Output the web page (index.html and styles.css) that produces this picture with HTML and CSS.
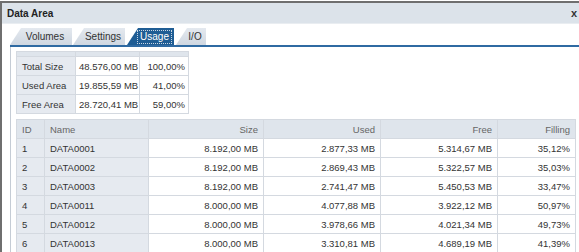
FILE: index.html
```html
<!DOCTYPE html>
<html>

<head>
    <meta charset="UTF-8">
    <title>Data Area</title>
    <link rel="stylesheet" href="styles.css">
</head>

<body>
    <div class="window">
        <div class="titlebar">
            <span class="title">Data Area</span>
            <span class="close">x</span>
        </div>

        <div class="content">
            <div class="tabs">
                <div class="tab tab-volumes">Volumes</div>
                <div class="tab tab-settings">Settings</div>
                <div class="tab tab-usage active"><span>Usage</span></div>
                <div class="tab tab-io">I/O</div>
            </div>

            <div class="panel">
                <table class="summary">
                    <colgroup>
                        <col class="sum-label">
                        <col class="sum-value">
                        <col class="sum-pct">
                    </colgroup>
                    <tr class="band">
                        <td></td>
                        <td></td>
                        <td></td>
                    </tr>
                    <tr>
                        <th>Total Size</th>
                        <td>48.576,00 MB</td>
                        <td class="num">100,00%</td>
                    </tr>
                    <tr>
                        <th>Used Area</th>
                        <td>19.855,59 MB</td>
                        <td class="num">41,00%</td>
                    </tr>
                    <tr>
                        <th>Free Area</th>
                        <td>28.720,41 MB</td>
                        <td class="num">59,00%</td>
                    </tr>
                </table>

                <table class="volumes">
                    <colgroup>
                        <col class="col-id">
                        <col class="col-name">
                        <col class="col-size">
                        <col class="col-used">
                        <col class="col-free">
                        <col class="col-fill">
                    </colgroup>
                    <thead>
                        <tr>
                            <th>ID</th>
                            <th>Name</th>
                            <th class="num">Size</th>
                            <th class="num">Used</th>
                            <th class="num">Free</th>
                            <th class="num">Filling</th>
                        </tr>
                    </thead>
                    <tbody>
                        <tr>
                            <td class="key">1</td>
                            <td class="key">DATA0001</td>
                            <td class="num">8.192,00 MB</td>
                            <td class="num">2.877,33 MB</td>
                            <td class="num">5.314,67 MB</td>
                            <td class="num">35,12%</td>
                        </tr>
                        <tr>
                            <td class="key">2</td>
                            <td class="key">DATA0002</td>
                            <td class="num">8.192,00 MB</td>
                            <td class="num">2.869,43 MB</td>
                            <td class="num">5.322,57 MB</td>
                            <td class="num">35,03%</td>
                        </tr>
                        <tr>
                            <td class="key">3</td>
                            <td class="key">DATA0003</td>
                            <td class="num">8.192,00 MB</td>
                            <td class="num">2.741,47 MB</td>
                            <td class="num">5.450,53 MB</td>
                            <td class="num">33,47%</td>
                        </tr>
                        <tr>
                            <td class="key">4</td>
                            <td class="key">DATA0011</td>
                            <td class="num">8.000,00 MB</td>
                            <td class="num">4.077,88 MB</td>
                            <td class="num">3.922,12 MB</td>
                            <td class="num">50,97%</td>
                        </tr>
                        <tr>
                            <td class="key">5</td>
                            <td class="key">DATA0012</td>
                            <td class="num">8.000,00 MB</td>
                            <td class="num">3.978,66 MB</td>
                            <td class="num">4.021,34 MB</td>
                            <td class="num">49,73%</td>
                        </tr>
                        <tr>
                            <td class="key">6</td>
                            <td class="key">DATA0013</td>
                            <td class="num">8.000,00 MB</td>
                            <td class="num">3.310,81 MB</td>
                            <td class="num">4.689,19 MB</td>
                            <td class="num">41,39%</td>
                        </tr>
                    </tbody>
                </table>
            </div>
        </div>
    </div>
</body>

</html>
```

FILE: styles.css
```css
:root {
    --frame: #6f6f6f;
    --title-bg: #dce3ea;
    --tab-active: #1f5d94;
    --tab-line: #2f6aa2;
    --cell-key: #e6eaf0;
    --cell-head: #dfe5ec;
    --cell-border: #d4d9e0;
    --text: #333333;
}

body {
    margin: 0;
    padding-top: 1px;
    background: #ffffff;
    font-family: "Liberation Sans", Arial, sans-serif;
    font-size: 9.5px;
    color: var(--text);
}

.window {
    border-left: 2px solid var(--frame);
    border-top: 2px solid var(--frame);
    height: 249px;
    overflow: hidden;
}

.titlebar {
    display: flex;
    align-items: center;
    justify-content: space-between;
    height: 20px;
    padding: 0 2px 0 5px;
    background: var(--title-bg);
    border-bottom: 1px solid #e9edf1;
}

.title {
    font-weight: bold;
    font-size: 10px;
    color: #222;
}

.close {
    font-weight: bold;
    font-size: 11px;
    color: #333;
}

.content {
    padding: 4px 0 0 8px;
}

/* Tabs */
.tabs {
    display: flex;
    align-items: flex-end;
    height: 17px;
    border-bottom: 2px solid var(--tab-line);
}

.tab {
    height: 17px;
    display: flex;
    align-items: center;
    justify-content: center;
    padding-left: 8px;
    box-sizing: border-box;
    margin-right: 2px;
    background: linear-gradient(#e4e9ef, #cfd7e1);
    clip-path: polygon(11px 0, 100% 0, 100% 100%, 0 100%);
    color: #333;
    font-size: 10px;
}

.tab-volumes {
    width: 62px;
    margin-right: 1px;
}

.tab-settings {
    width: 52px;
}

.tab-usage {
    width: 47px;
}

.tab-io {
    width: 30px;
}

.tab.active {
    background: var(--tab-active);
    color: #ffffff;
}

.tab.active span {
    outline: 1px dotted #c9d6e4;
    padding: 0 2px;
    line-height: 12px;
}

/* Panel */
.panel {
    border-left: 1px solid #c5ccd5;
    height: 210px;
    padding: 4px 0 0 5px;
}

table {
    border-collapse: collapse;
    table-layout: fixed;
}

td,
th {
    border: 1px solid var(--cell-border);
    height: 19px;
    padding: 0 5px;
    font-weight: normal;
    text-align: left;
    white-space: nowrap;
    box-sizing: border-box;
}

.num {
    text-align: right;
}

/* Summary */
.summary {
    width: 172px;
    margin-bottom: 5px;
}

.sum-label {
    width: 59px;
}

.sum-value {
    width: 64px;
}

.sum-pct {
    width: 49px;
}

.summary .band td {
    height: 5px;
    background: var(--cell-head);
    padding: 0;
}

.summary th {
    background: var(--cell-key);
}

.summary td {
    padding: 0 3px;
}

/* Volumes */
.volumes {
    width: 559px;
}

.volumes thead th {
    background: var(--cell-head);
    color: #666;
}

.volumes .key {
    background: var(--cell-key);
}

.col-id {
    width: 28px;
}

.col-name {
    width: 104px;
}

.col-size {
    width: 115px;
}

.col-used {
    width: 117px;
}

.col-free {
    width: 117px;
}

.col-fill {
    width: 78px;
}
```
